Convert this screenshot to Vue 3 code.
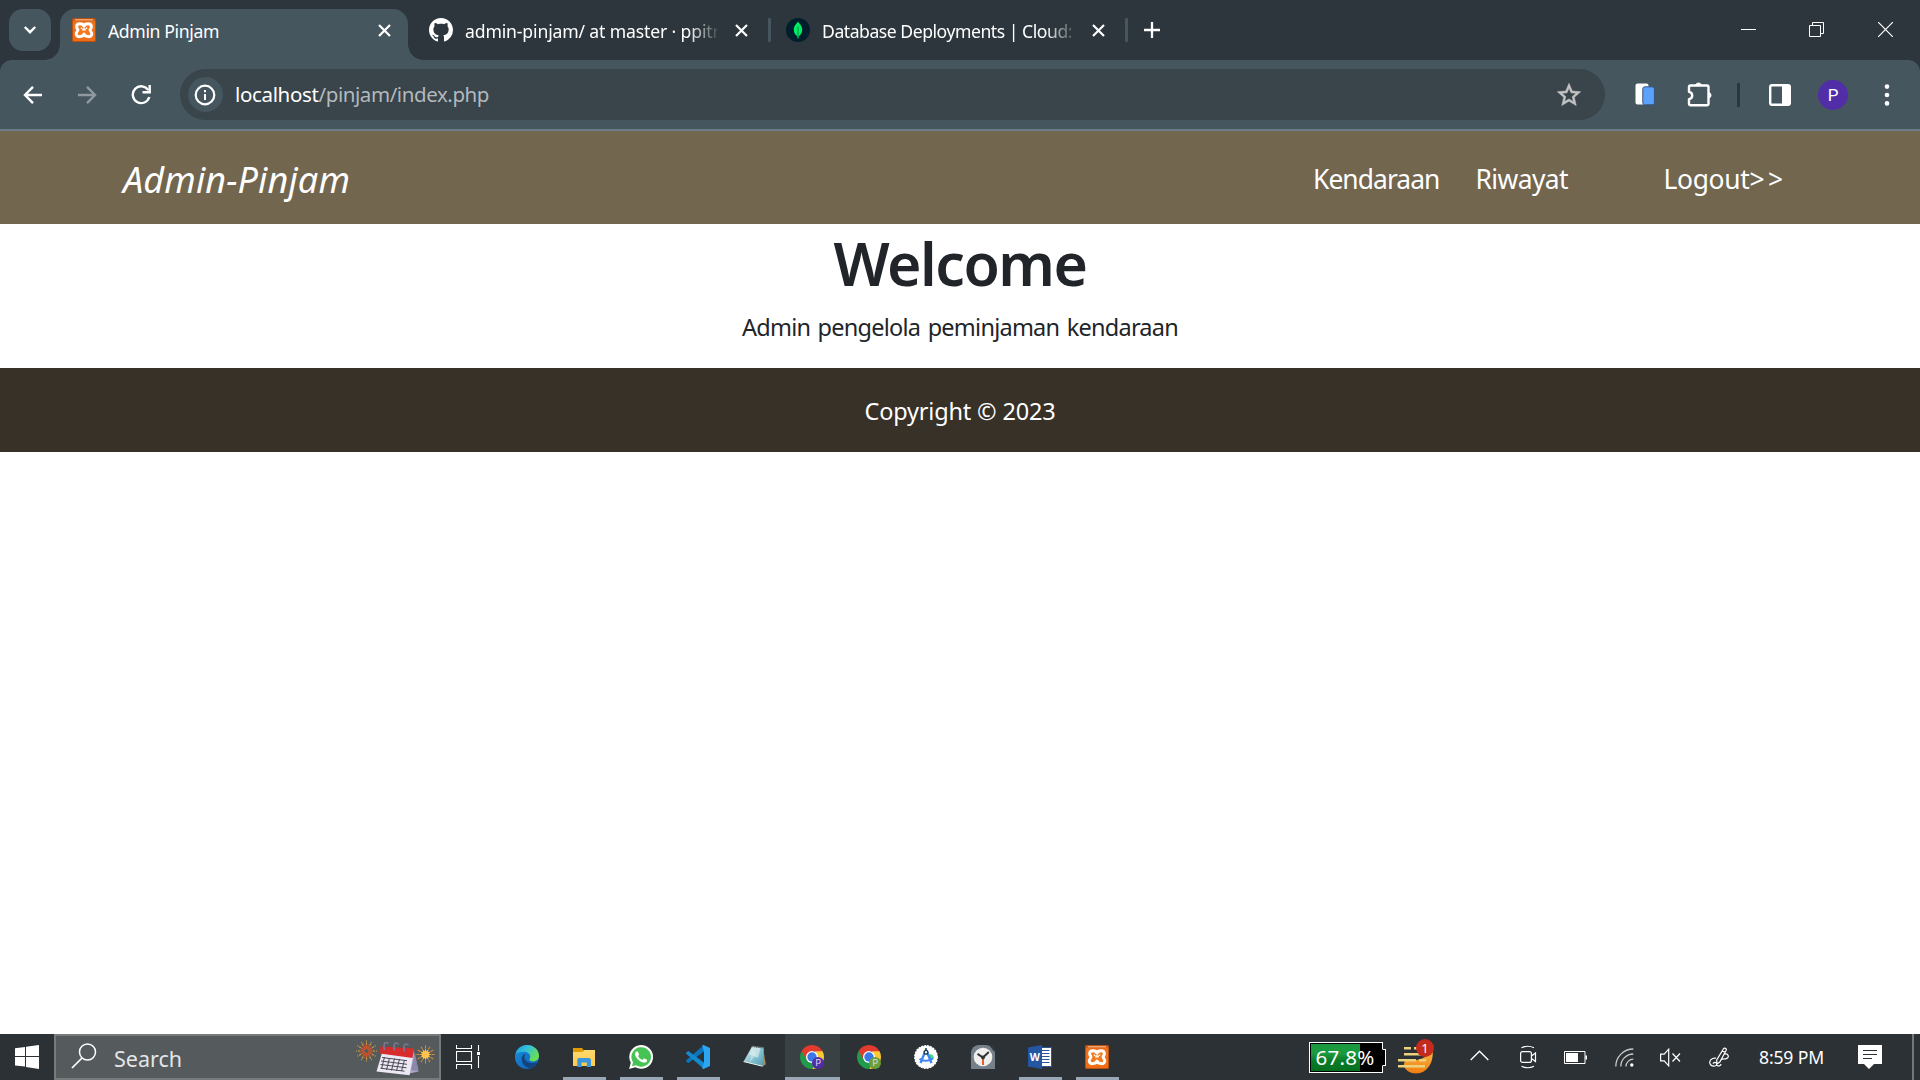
<script setup>
// Tracks a text run so that it occupies the given advance width in pixels.
const vFit = {
  mounted(el, { value }) {
    const natural = el.getBoundingClientRect().width
    const count = el.textContent.trim().length
    el.style.letterSpacing = `${((value - natural) / count).toFixed(3)}px`
  }
}

const tabs = [
  { id: 'xampp', title: 'Admin Pinjam', width: 111, active: true },
  { id: 'github', title: 'admin-pinjam/ at master · ppitri', width: 259, fade: true },
  { id: 'mongo', title: 'Database Deployments | Cloud:', width: 250, fade: true }
]

const apps = [
  { id: 'edge' },
  { id: 'explorer', open: true },
  { id: 'whatsapp', open: true },
  { id: 'vscode', open: true },
  { id: 'notepad' },
  { id: 'chrome', active: true, badge: '#512da8' },
  { id: 'chrome', badge: '#689f38' },
  { id: 'studio' },
  { id: 'clock' },
  { id: 'word', open: true },
  { id: 'xampp', open: true }
]

const rays = Array.from({ length: 12 }, (_, i) => i * 30)
</script>

<template>
  <div class="screen">
    <svg class="defs" width="0" height="0">
      <defs>
        <linearGradient id="orange" x1="0" y1="0" x2="0" y2="1">
          <stop offset="0" stop-color="#c65a14" /><stop offset=".15" stop-color="#ef7420" /><stop offset="1" stop-color="#f06d16" />
        </linearGradient>
        <linearGradient id="edgeTop" x1="0" y1="0" x2="1" y2=".5">
          <stop offset="0" stop-color="#1b9de2" /><stop offset=".5" stop-color="#35c1d8" /><stop offset="1" stop-color="#6be04f" />
        </linearGradient>
        <linearGradient id="edgeLow" x1="0" y1="0" x2="1" y2="1">
          <stop offset="0" stop-color="#1b8fe0" /><stop offset="1" stop-color="#0f5cb0" />
        </linearGradient>
        <linearGradient id="glass" x1="0" y1="0" x2="1" y2="1">
          <stop offset="0" stop-color="#e4f3f5" /><stop offset=".5" stop-color="#8cc4d0" /><stop offset="1" stop-color="#4f9fb4" />
        </linearGradient>
        <linearGradient id="moon" x1="0" y1="0" x2="0" y2="1">
          <stop offset="0" stop-color="#f9b845" /><stop offset="1" stop-color="#ef7d12" />
        </linearGradient>
        <linearGradient id="folder" x1="0" y1="0" x2="0" y2="1">
          <stop offset="0" stop-color="#ffd970" /><stop offset="1" stop-color="#ffcb4b" />
        </linearGradient>
        <symbol id="xampp" viewBox="0 0 24 24">
          <rect width="24" height="24" rx="1.5" fill="#b9500f" />
          <rect x="1" y="1" width="22" height="22" rx="1.5" fill="url(#orange)" />
          <path d="M3 1.8h18" stroke="#f9c79f" stroke-width="1" />
          <path d="M12 8.2C10.800 4.800 4.600 4.800 4.600 8.800c0 1.800 1.300 2 1.300 3.200S4.200 14 4.200 15.800c0 4 6.400 3.600 7.800.2 1.400 3.400 7.800 3.800 7.800-.2 0-1.800-1.700-2.600-1.700-3.800s1.300-1.400 1.300-3.200c0-4-6.200-4-7.400-.6z" fill="#f57a1f" stroke="#fff" stroke-width="2.900" stroke-linejoin="round" />
          <path d="M10.200 11.400h3.600" stroke="#fff" stroke-width="2.200" />
          <path d="M9.400 9.400v1.600M14.600 9.400v1.600" stroke="#fff" stroke-width="1.200" />
        </symbol>
        <symbol id="github" viewBox="0 0 16 16">
          <path fill="#fff" d="M8 0C3.58 0 0 3.58 0 8c0 3.54 2.29 6.53 5.47 7.59.4.07.55-.17.55-.38 0-.19-.01-.82-.01-1.49-2.01.37-2.53-.49-2.69-.94-.09-.23-.48-.94-.82-1.13-.28-.15-.68-.52-.01-.53.63-.01 1.08.58 1.23.82.72 1.21 1.87.87 2.33.66.07-.52.28-.87.51-1.07-1.78-.2-3.64-.89-3.64-3.95 0-.87.31-1.59.82-2.15-.08-.2-.36-1.02.08-2.12 0 0 .67-.21 2.2.82.64-.18 1.32-.27 2-.27.68 0 1.36.09 2 .27 1.53-1.04 2.2-.82 2.2-.82.44 1.1.16 1.92.08 2.12.51.56.82 1.27.82 2.15 0 3.07-1.87 3.75-3.65 3.95.29.25.54.73.54 1.48 0 1.07-.01 1.93-.01 2.2 0 .21.15.46.55.38A8.013 8.013 0 0016 8c0-4.42-3.58-8-8-8z" />
        </symbol>
        <symbol id="mongo" viewBox="0 0 24 24">
          <circle cx="12" cy="12" r="12" fill="#001e2b" />
          <path d="M12 3.600c1 2 4.200 4 4.200 8.400 0 3.400-2 5-3.500 6.300L12.400 20.500h-.8l-.3-2.200C9.800 17 7.800 15.400 7.800 12 7.800 7.600 11 5.600 12 3.600z" fill="#00ed64" />
          <path d="M12 8.500v11" stroke="#04a24b" stroke-width="1.300" />
        </symbol>
        <symbol id="edge" viewBox="0 0 24 24">
          <circle cx="12" cy="12" r="12" fill="url(#edgeLow)" />
          <path d="M.6 9C2 3.500 6.500 0 12 0c7 0 12 5 12 10.800 0 3.600-2.700 5.700-5.600 5.700-2.600 0-4.200-1-4.200-1.900 0-.7 1-1.100 1-2.900 0-2.700-2.700-4.900-6.200-4.900C5.600 6.800 2.500 8 .6 9z" fill="url(#edgeTop)" />
          <path d="M9 9.200c-1.500 1.300-2.300 3-2.300 5 0 4.800 4.300 9.100 9.300 9.100 3.200-1.200 5.400-3.500 6.500-5.400.3-.6-.2-.9-.7-.6-1.200.6-2.600.9-4.100.9-4.700 0-8.300-2.700-8.300-6.200 0-1.100.4-1.900 1-2.600z" fill="#12447f" />
          <path d="M24 16.800a12 12 0 0 1-2 2.600V24h2z" fill="#2c3135" />
        </symbol>
        <symbol id="explorer" viewBox="0 0 24 24">
          <path d="M1 3h9l2 2.500V9H1z" fill="#e09c00" />
          <path d="M1 7h9.500l1.800-2H23v16H1z" fill="url(#folder)" />
          <path d="M5.300 22v-7.600l1.200-1.400h11l1.500 1.400V22h-4.200v-4.600H9.600V22z" fill="#3a96dd" />
        </symbol>
        <symbol id="whatsapp" viewBox="0 0 24 24">
          <path d="M.1 24l1.700-6.200A11.900 11.900 0 1 1 6.300 22.300z" fill="#fff" />
          <path d="M3 21.200l1-3.900a9.800 9.800 0 1 1 3.100 3z" fill="#47c353" />
          <path fill="#fff" d="M17.472 14.382c-.297-.149-1.758-.867-2.030-.967-.273-.099-.471-.148-.67.150-.197.297-.767.966-.94 1.164-.173.199-.347.223-.644.075-.297-.15-1.255-.463-2.390-1.475-.883-.788-1.480-1.761-1.653-2.059-.173-.297-.018-.458.130-.606.134-.133.298-.347.446-.52.149-.174.198-.298.298-.497.099-.198.050-.371-.025-.52-.075-.149-.669-1.612-.916-2.207-.242-.579-.487-.5-.669-.51-.173-.008-.371-.01-.57-.01-.198 0-.52.074-.792.372-.272.297-1.040 1.016-1.040 2.479 0 1.462 1.065 2.875 1.213 3.074.149.198 2.096 3.200 5.077 4.487.709.306 1.262.489 1.694.625.712.227 1.360.195 1.871.118.571-.085 1.758-.719 2.006-1.413.248-.694.248-1.289.173-1.413-.074-.124-.272-.198-.57-.347" />
        </symbol>
        <symbol id="vscode" viewBox="0 0 24 24">
          <path d="M18 0v6.500L2.300 18 .2 16.400v-1.100z" fill="#0b76bd" />
          <path d="M18 24v-6.500L2.300 6 .2 7.600v1.100z" fill="#1489d0" />
          <path d="M17.500 0L24 3v18l-6.500 3c-.5.200-1-.2-1.200-.7L18 17.500v-11L16.300.7c.2-.5.700-.9 1.200-.7z" fill="#2ba6f3" />
        </symbol>
        <symbol id="notepad" viewBox="0 0 24 24">
          <path d="M20 2.500l2.800 16.800-3.600 2.500z" fill="#a58b63" />
          <path d="M9.200 1.200L20.800 2.600l-1.200 18.600L.6 16.600z" fill="url(#glass)" />
          <path d="M9.200 1.200L6 9.500l9 3.400L17.500 3z" fill="#dceef1" opacity=".65" />
          <path d="M9.200 5l-3 12.800 8-9z" fill="#d9eef2" opacity=".5" />
          <path d="M8.800 1.300L21 2.800" stroke="#5b6364" stroke-width="1.600" stroke-dasharray="1.500 .7" />
          <path d="M.6 16.600l19 4.600" stroke="#e9eeee" stroke-width="1" />
        </symbol>
        <symbol id="chrome" viewBox="0 0 24 24">
          <path d="M22.390 6A12 12 0 0 1 12 24l5-9-2-9z" fill="#fcc934" />
          <path d="M1.610 6A12 12 0 0 0 12 24l5-9-5-3z" fill="#229a4b" />
          <path d="M1.610 6A12 12 0 0 1 22.390 6l.1.200H12l-5.200 8.800z" fill="#e33b2e" />
          <circle cx="12" cy="12" r="6" fill="#fff" /><circle cx="12" cy="12" r="4.700" fill="#3b78e7" />
        </symbol>
        <symbol id="studio" viewBox="0 0 24 24">
          <circle cx="12" cy="12" r="11.300" fill="#fff" stroke="#fff" stroke-width="1.300" stroke-dasharray="2 1" />
          <path d="M14 10c3-2 6 0 6 3.800h-4z" fill="#3ddc84" />
          <path d="M11 7L6.500 18M13 7l4.500 11" stroke="#4285f4" stroke-width="2.400" />
          <path d="M5.500 13.800c4 2.600 9 2.600 13.500-.3" fill="none" stroke="#4285f4" stroke-width="2" />
          <path d="M12 3v3" stroke="#073042" stroke-width="1.400" />
          <circle cx="12" cy="7.300" r="1.900" fill="#e7eef8" stroke="#073042" stroke-width="1.200" />
        </symbol>
        <symbol id="clock" viewBox="0 0 24 24">
          <path d="M0 24V8a8 8 0 0 1 8-8h7a9 9 0 0 1 9 9v15z" fill="#75808a" />
          <path d="M18.500.5l3-.3 2 3.300-.5 3z" fill="#34393d" />
          <circle cx="12" cy="12" r="9.300" fill="#efefed" />
          <path d="M12 12.500v7.500" stroke="#e64a19" stroke-width="1.800" />
          <path d="M6.500 8.800L12 12.500l5.800-5.400" fill="none" stroke="#303336" stroke-width="2" />
          <circle cx="12" cy="12.400" r="1.900" fill="#303336" />
        </symbol>
        <symbol id="word" viewBox="0 0 24 24">
          <path d="M13 2.500h10.500v19H13z" fill="#fff" stroke="#2b579a" stroke-width="1" />
          <path d="M14 5.500h7.500M14 8.500h7.500M14 11.500h7.500M14 14.500h7.500M14 17.500h7.500" stroke="#2b579a" stroke-width="1.200" />
          <path d="M0 2.600L14 0v24L0 21.400z" fill="#2456a4" />
          <text x="1.800" y="15.600" font-family="Noto Sans, sans-serif" font-weight="700" font-size="10.500" fill="#fff">W</text>
        </symbol>
      </defs>
    </svg>

    <header class="tabstrip">
      <button class="tab-search">
        <svg width="14" height="10" viewBox="0 0 14 10"><path d="M1.800 2L7 7.200 12.200 2" fill="none" stroke="#fff" stroke-width="2.400" /></svg>
      </button>
      <div v-for="tab in tabs" :key="tab.id" class="tab" :class="{ active: tab.active }">
        <svg class="favicon" width="24" height="24"><use :href="'#' + tab.id" /></svg>
        <span class="title" :class="{ fade: tab.fade }"><span v-fit="tab.width">{{ tab.title }}</span></span>
        <svg class="tab-close" width="13" height="13" viewBox="0 0 13 13"><path d="M1 1l11 11M12 1L1 12" stroke="#fff" stroke-width="2.200" /></svg>
        <i v-if="!tab.active" class="tab-sep"></i>
      </div>
      <svg class="new-tab" width="16" height="16" viewBox="0 0 16 16"><path d="M8 0v16M0 8h16" stroke="#fff" stroke-width="2.300" /></svg>
      <div class="window-controls">
        <span><svg class="minimise" width="15" height="15" viewBox="0 0 15 15"><path d="M0 7.500h15" stroke="#fff" /></svg></span>
        <span><svg width="15" height="15" viewBox="0 0 15 15"><path d="M.5 3.500h11v11H.5zM3.500 3.500v-3h11v11h-3" fill="none" stroke="#fff" /></svg></span>
        <span><svg width="15" height="15" viewBox="0 0 15 15"><path d="M0 0l15 15M15 0L0 15" stroke="#fff" stroke-width="1.200" /></svg></span>
      </div>
    </header>

    <div class="toolbar-bg">
      <div class="toolbar">
        <svg class="back" width="20" height="18" viewBox="0 0 20 18"><path d="M10 .8L2 9l8 8.200M2 9h17" fill="none" stroke="#fff" stroke-width="2.400" /></svg>
        <svg class="forward" width="20" height="18" viewBox="0 0 20 18"><path d="M10 .8L18 9l-8 8.200M18 9H1" fill="none" stroke="#8f999f" stroke-width="2.400" /></svg>
        <svg class="reload" width="21" height="20" viewBox="0 0 21 20"><path d="M17.300 5.200A8.400 8.400 0 1 0 18.300 12" fill="none" stroke="#fff" stroke-width="2.400" /><path d="M18.700 0v7.200h-7.200" fill="none" stroke="#fff" stroke-width="2.400" /></svg>
        <div class="omnibox">
          <span class="site-info">
            <svg width="22" height="22" viewBox="0 0 22 22"><circle cx="11" cy="11" r="9.300" fill="none" stroke="#fff" stroke-width="2.200" /><path d="M11 10v6M11 6v2.200" stroke="#fff" stroke-width="2" /></svg>
          </span>
          <span class="url"><b v-fit="83.5">localhost</b><span v-fit="170.5">/pinjam/index.php</span></span>
          <svg class="star" width="28" height="28" viewBox="0 0 24 24"><path fill="#c3c3c3" stroke="#c3c3c3" stroke-width=".5" d="M22 9.240l-7.190-.62L12 2 9.190 8.630 2 9.240l5.460 4.730L5.820 21 12 17.270 18.180 21l-1.630-7.030L22 9.240zM12 15.400l-3.760 2.270 1-4.280-3.320-2.880 4.380-.38L12 6.100l1.710 4.040 4.380.38-3.320 2.880 1 4.280L12 15.400z" /></svg>
        </div>
        <svg class="ext" width="20" height="23" viewBox="0 0 20 23"><rect x=".5" y=".5" width="13" height="21" rx="2" fill="#fff" /><rect x="7.800" y="3.800" width="11.600" height="18" rx="2" fill="#5ba3fa" stroke="#39517b" stroke-width="1" /></svg>
        <svg class="puzzle" width="26" height="26" viewBox="0 0 26 26"><path d="M3.500 4.500H20a1.500 1.500 0 0 1 1.500 1.500v16.800a1.500 1.500 0 0 1-1.500 1.500H3.500A1.500 1.500 0 0 1 2 22.800v-4.500c2-.3 3.200-1.800 3.200-3.700S4 11.200 2 10.900V6a1.500 1.500 0 0 1 1.500-1.500z" fill="none" stroke="#fff" stroke-width="2.400" stroke-linejoin="round" /><path d="M8.600 4a3.100 3.100 0 0 1 5.800 0zM22 11.400a3.100 3.100 0 0 1 0 5.800z" fill="#fff" stroke="#fff" /></svg>
        <i class="tool-sep"></i>
        <svg class="panel" width="22" height="22" viewBox="0 0 22 22"><rect x="1.200" y="1.200" width="19.600" height="19.600" rx="1.800" fill="none" stroke="#fff" stroke-width="2.400" /><path d="M13 1h8v20h-8z" fill="#fff" /></svg>
        <span class="avatar">P</span>
        <svg class="kebab" width="6" height="22" viewBox="0 0 6 22"><g fill="#fff"><circle cx="3" cy="2.600" r="2.300" /><circle cx="3" cy="11" r="2.300" /><circle cx="3" cy="19.400" r="2.300" /></g></svg>
      </div>
    </div>

    <main class="page">
      <nav class="navbar">
        <a class="brand"><span v-fit="227">Admin-Pinjam</span></a>
        <a class="link kendaraan"><span v-fit="126.5">Kendaraan</span></a>
        <a class="link riwayat"><span v-fit="92.5">Riwayat</span></a>
        <a class="link logout"><span v-fit="86">Logout</span><span v-fit="37">&gt;&gt;</span></a>
      </nav>
      <section class="hero">
        <h1><span v-fit="253">Welcome</span></h1>
        <p><span v-fit="436">Admin pengelola peminjaman kendaraan</span></p>
      </section>
      <footer class="footer"><span v-fit="191">Copyright © 2023</span></footer>
    </main>

    <div class="taskbar">
      <div class="start">
        <svg width="24" height="24" viewBox="0 0 24 24"><path d="M0 3.200L10 1.900V11H0zM11 1.700L24 0v11H11zM0 12h10v9.500L0 20.500zM11 12h13v12l-13-2z" fill="#fff" /></svg>
      </div>
      <div class="search">
        <svg width="26" height="26" viewBox="0 0 26 26"><circle cx="16.500" cy="9" r="8" fill="none" stroke="#fff" stroke-width="1.500" /><path d="M11 15L1 25" stroke="#fff" stroke-width="1.700" /></svg>
        <span class="search-text"><span v-fit="68">Search</span></span>
        <svg class="doodle" width="80" height="40" viewBox="0 0 80 40">
          <g transform="translate(11.500 14)" stroke-width="1.100">
            <g v-for="a in rays" :key="a" :transform="'rotate(' + a + ')'"><path d="M0 2v4" stroke="#e0562c" /><path d="M0 6.500v4" stroke="#dba43a" stroke-dasharray="2 1" /></g>
            <g v-for="a in rays" :key="'m' + a" :transform="'rotate(' + (a + 15) + ')'"><path d="M0 2v5" stroke="#b5542f" stroke-width=".7" /></g>
          </g>
          <g transform="translate(70.500 17.500)" stroke-width="1">
            <g v-for="a in rays" :key="a" :transform="'rotate(' + a + ')'"><path d="M0 6v3" stroke="#e18a35" /><path d="M-1.300 2L0 6l1.300-4z" fill="#ffc24a" /></g>
            <circle r="3.600" fill="#ffc24a" />
          </g>
          <g transform="translate(0 1)">
            <path d="M58 10l5.500 23.500-9 2z" fill="#a9a6c1" /><path d="M56 32l4-17 3.500 18z" fill="#8b88a9" />
            <path d="M27 15l31 3.500-3.500 18.700L21.500 33.500z" fill="#ece9f5" />
            <path d="M25.500 8.500L59 10.500l-1.500 9.500-32.500-4.500z" fill="#d82c2c" />
            <path d="M27 19.500l25 3.200M26 23l26 3.300M25.500 26.500l26 3.300M25.500 30.200l24 3M29.500 19l-3 12M34.500 20l-3 12M39.500 20.500l-3 12M44.500 21l-3 12M49.500 22l-3 11" stroke="#4b4953" stroke-width="1" fill="none" />
            <g fill="none" stroke="#7b7991" stroke-width="1.600"><path d="M29.500 12c-1.500-8 1-8.500 4-6.500" /><path d="M39.500 12.500c-1.500-8 1-8.500 4-6.500" /><path d="M49.500 13.500c-1.500-8 1-8.500 4-6.500" /></g>
          </g>
        </svg>
      </div>
      <div class="task-view">
        <svg width="24" height="24" viewBox="0 0 24 24"><path d="M.5 0v3.500h15V0M.5 6.500h15v10H.5zM.5 24v-4.500h15V24M22.500 0v6M22.500 11v12" fill="none" stroke="#fff" stroke-width="1.100" /><path d="M21 7h3v3h-3z" fill="#fff" /></svg>
      </div>
      <div class="apps">
        <div v-for="(app, i) in apps" :key="i" class="app" :class="{ open: app.open, active: app.active }">
          <svg width="24" height="24" viewBox="0 0 24 24">
            <use :href="'#' + app.id" />
            <g v-if="app.badge">
              <circle cx="18" cy="18" r="6" :fill="app.badge" />
              <text x="18.100" y="21.200" text-anchor="middle" font-family="Roboto, sans-serif" font-size="8.500" fill="#e6e0f0">P</text>
            </g>
          </svg>
        </div>
      </div>
      <div class="tray">
        <div class="meter"><i class="charge"></i><span class="meter-text"><span v-fit="59">67.8%</span></span></div>
        <svg class="weather" width="38" height="38" viewBox="0 0 38 38">
          <path d="M35.500 13.500C37 24 31 36.500 19 36.500 13 36.500 9 33.500 6.500 29L8 23c12 2 22-2 27.500-9.500z" fill="url(#moon)" />
          <path d="M7 11.200h7M17 11.200h6M7 17.200h19M1 23.200h18M22 23.200h7M1 29.200h27" stroke="#ecd27c" stroke-width="2.400" />
          <circle cx="28" cy="11" r="9" fill="#c42b1c" />
          <text x="28" y="15.800" text-anchor="middle" font-family="Noto Sans, sans-serif" font-size="13" fill="#fff">1</text>
        </svg>
        <svg class="chevron" width="19" height="11" viewBox="0 0 19 11"><path d="M.7 10L9.500 1.200l8.800 8.800" fill="none" stroke="#fff" stroke-width="1.400" /></svg>
        <svg class="camera" width="17" height="24" viewBox="0 0 17 24"><rect x=".6" y="6.600" width="10.800" height="10.800" rx="2" fill="none" stroke="#fff" stroke-width="1.200" /><path d="M11.500 11l4-3v8.500l-4-3M1.500 2.800c4-2 8.500-2 12.500 0M1.500 21.200c4 2 8.500 2 12.500 0" fill="none" stroke="#fff" stroke-width="1.200" /></svg>
        <svg class="power" width="23" height="13" viewBox="0 0 23 13"><path d="M.5.5h20.500v12H.5z" fill="none" stroke="#fff" /><path d="M2 2h12v9H2zM21.500 4.500H23v4h-1.500z" fill="#fff" /></svg>
        <svg class="wifi" width="19" height="19" viewBox="0 0 19 19"><g fill="none" stroke="#c8cacb" stroke-width="1.300"><path d="M.8 18.500A17.500 17.500 0 0 1 18.300 1" /><path d="M5.800 18.500A12.500 12.500 0 0 1 18.300 6" /><path d="M11 18.500a7.300 7.300 0 0 1 7.300-7.300" /></g><circle cx="16.800" cy="17" r="1.700" fill="#fff" /></svg>
        <svg class="volume" width="21" height="19" viewBox="0 0 21 19"><path d="M.6 6.200h3.600L8.700 1.200v16.600l-4.500-5H.6zM12.500 5.500l7.500 8M20 5.500l-7.500 8" fill="none" stroke="#fff" stroke-width="1.200" /></svg>
        <svg class="pen" width="21" height="21" viewBox="0 0 21 21"><path d="M8 17L7.700 13 14.500 1.800c.8-1.300 3.500-.2 2.700 1.400L10.800 15zM13.300 3.800l2.800 1.600M7 11.200c-4.500-.5-7 2.500-6 5.600 1 3 5.500 2.800 6.500 1.200 1.500-2.500-2.500-3.500-3.500-1.200M15.800 7c4-.6 5 4 .8 4.800-2 .3-3.800.2-4.600 1.200M7.800 18.200c2 1.600 4 .6 4.200-1.200" fill="none" stroke="#fff" stroke-width="1.200" /></svg>
        <span class="time"><span v-fit="65">8:59 PM</span></span>
        <svg class="notice" width="24" height="24" viewBox="0 0 24 24"><path d="M0 0h24v19h-8l-5 5-5-5H0z" fill="#fff" /><path d="M5 5.500h14M5 9.500h14M5 13.500h9" stroke="#2c3135" stroke-width="1.100" /></svg>
        <i class="show-desktop"></i>
      </div>
    </div>
  </div>
</template>

<style>
html, body { margin: 0; overflow: hidden; }
</style>

<style scoped>
.screen { width: 1920px; height: 1080px; display: flex; flex-direction: column; background: #fff; font-family: "Noto Sans", "Open Sans", sans-serif; overflow: hidden; white-space: nowrap; }
.defs { position: absolute; }
svg { display: block; flex: none; }
button { border: 0; padding: 0; }

.tabstrip { height: 60px; flex: none; display: flex; background: #2c363c; color: #fff; }
.tab-search { width: 42px; height: 42px; margin: 9px 9px 0; border-radius: 14px; background: #45565f; display: flex; align-items: center; justify-content: center; flex: none; }
.tab { display: flex; align-items: center; height: 42px; margin-top: 9px; width: 357px; box-sizing: border-box; padding-left: 18px; flex: none; }
.tab.active { position: relative; width: 348px; height: 51px; padding: 0 0 9px 12px; margin-right: 3px; background: #45565f; border-radius: 15px 15px 0 0; }
.tab.active::before, .tab.active::after { content: ""; position: absolute; bottom: 0; width: 15px; height: 15px; }
.tab.active::before { left: -15px; background: radial-gradient(circle at 0 0, transparent 14.5px, #45565f 15px); }
.tab.active::after { right: -15px; background: radial-gradient(circle at 100% 0, transparent 14.5px, #45565f 15px); }
.title { margin-left: 12px; width: 269px; font-size: 17.6px; line-height: 24px; padding-top: 2px; overflow: hidden; flex: none; }
.fade { width: 252px; -webkit-mask-image: linear-gradient(90deg, #000 223px, transparent 256px); mask-image: linear-gradient(90deg, #000 223px, transparent 256px); }
.tab-close { margin-left: 17.5px; }
.active .tab-close { margin-left: 0.5px; }
.tab-sep { width: 3px; height: 24px; margin-left: 20.5px; border-radius: 1px; background: #45565f; flex: none; }
.new-tab { margin: 22px 0 0 19px; }
.window-controls { margin-left: auto; display: flex; height: 59px; }
.window-controls span { width: 69px; display: flex; align-items: center; justify-content: center; }
.minimise { margin-left: 2px; }

.toolbar-bg { background: #2c363c; flex: none; }
.toolbar { height: 69px; box-sizing: content-box; display: flex; align-items: center; background: #45565f; border-radius: 12px 12px 0 0; border-bottom: 2px solid #6b7d86; }
.back { margin-left: 23px; }
.forward { margin-left: 34px; }
.reload { margin-left: 34px; }
.omnibox { width: 1425px; height: 51px; margin-left: 28px; border-radius: 26px; background: #39444b; display: flex; align-items: center; flex: none; }
.site-info { width: 35px; height: 35px; margin-left: 8px; border-radius: 50%; background: #45565f; display: flex; align-items: center; justify-content: center; }
.site-info svg { margin-right: 1px; }
.url { margin-left: 12px; font-size: 20.5px; line-height: 30px; color: #b3b9bc; padding-bottom: 2px; }
.url b { font-weight: 400; color: #fff; }
.star { margin-left: auto; margin-right: 22px; }
.ext { margin-left: 30px; }
.puzzle { margin: 0 0 2px 32px; }
.tool-sep { width: 3px; height: 24px; margin-left: 24px; background: #2c363c; }
.panel { margin-left: 29px; }
.avatar { width: 30px; height: 30px; margin-left: 27px; border-radius: 50%; background: #512da8; color: #fff; font: 17px/30px Roboto, sans-serif; text-align: center; }
.kebab { margin-left: 36px; }

.page { flex: 1; }
.navbar { height: 93px; display: flex; background: #72664f; color: #fff; }
.brand { margin-left: 123px; width: 1190px; font-size: 36px; font-style: italic; line-height: 98px; }
.link { font-size: 26.4px; line-height: 96px; }
.kendaraan { width: 162.5px; }
.riwayat { width: 188px; }
.hero { height: 144px; text-align: center; color: #212529; display: flow-root; }
h1 { margin: 0; font-size: 59px; font-weight: 600; line-height: 82px; height: 74px; }
h1 span { position: relative; top: -2px; }
p { margin: 11px 0 0; font-size: 23.5px; line-height: 36px; word-spacing: 2px; }
.footer { height: 84px; box-sizing: border-box; line-height: 36px; padding-top: 25px; text-align: center; font-size: 23.5px; color: #fff; background: #383127; }

.taskbar { height: 46px; flex: none; display: flex; background: #2c3135; color: #fff; }
.start { width: 54px; display: flex; align-items: center; justify-content: center; }
.search { width: 387px; box-sizing: border-box; border: 2px solid #777b7c; background: #555a5c; display: flex; align-items: center; padding-left: 15px; }
.search svg:first-child { margin-bottom: 3px; }
.search-text { margin-left: 17px; width: 241px; font-size: 21.5px; line-height: 30px; color: #e4e6e7; padding-top: 3px; flex: none; }
.task-view { width: 57.5px; display: flex; align-items: center; padding-left: 15px; box-sizing: border-box; }
.apps { display: flex; }
.app { position: relative; width: 57px; display: flex; align-items: center; justify-content: center; }
.app.active { background: linear-gradient(#394144, #394144) center / 55px 100% no-repeat; }
.app.open::after, .app.active::after { content: ""; position: absolute; bottom: 0; left: 7px; width: 43px; height: 3px; background: #99a7b7; }
.app.active::after { left: 1px; width: 55px; }
.tray { margin-left: auto; display: flex; align-items: center; flex: none; }
.meter { position: relative; width: 70px; height: 27px; border: 1px solid #fff; background: #000; padding: 1px; display: flex; }
.meter::after { content: ""; position: absolute; right: -4px; top: 6px; width: 2px; height: 15px; background: #000; border: 1px solid #fff; border-left-color: #000; }
.charge { width: 49px; height: 27px; background: linear-gradient(#1c9a3f, #1c9a3f 35%, #0b7d28 60%, #04701f); }
.meter-text { position: absolute; left: 6px; top: 0; font-size: 20.5px; line-height: 29px; }
.weather { margin: 0 0 2px 14px; }
.chevron { margin-left: 35.5px; margin-bottom: 4px; }
.camera { margin-left: 31px; }
.power { margin-left: 27px; }
.wifi { margin-left: 28px; margin-top: 1px; }
.volume { margin-left: 26px; }
.pen { margin-left: 28px; }
.time { margin-left: 29px; font-size: 17.6px; line-height: 24px; width: 70px; }
.notice { margin-left: 29px; }
.show-desktop { width: 2px; height: 46px; margin: 0 6px 0 30px; background: #73777a; }
</style>
